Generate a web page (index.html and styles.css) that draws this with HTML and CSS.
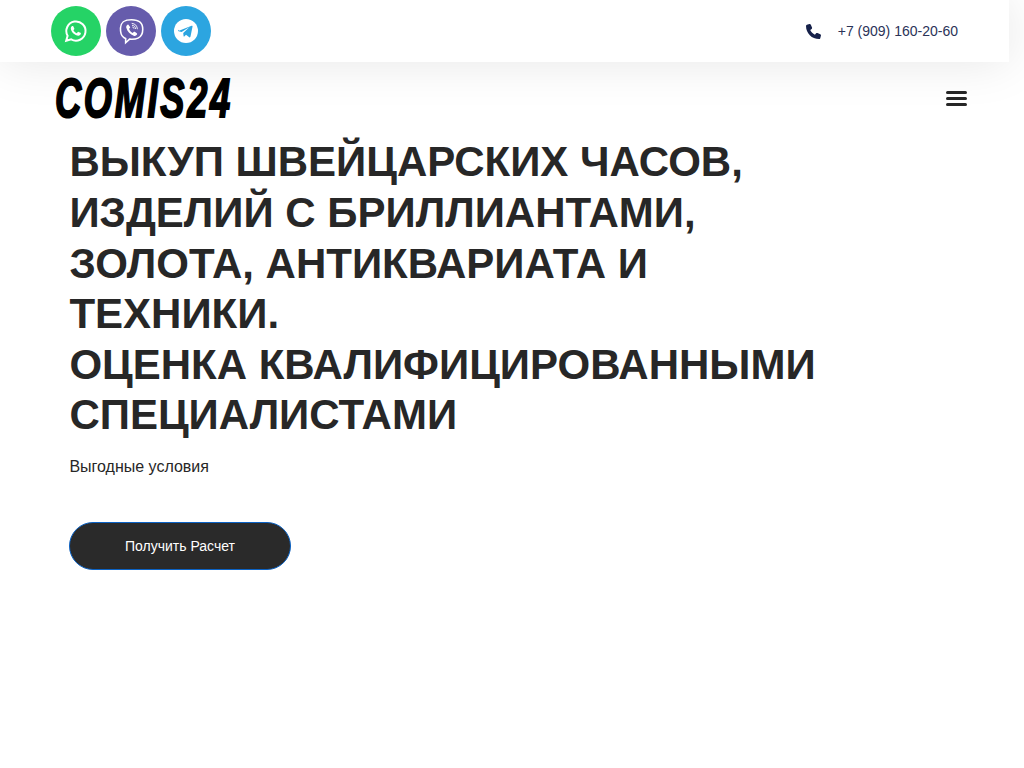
FILE: index.html
```html
<!DOCTYPE html>
<html lang="ru">
<head>
<meta charset="utf-8">
<title>COMIS24</title>
<link rel="stylesheet" href="styles.css">
</head>
<body>
<div class="page">
  <header class="topbar">
    <div class="socials">
      <a class="social whatsapp" href="#">
        <svg viewBox="0 0 24 24" width="24" height="24"><path fill="none" stroke="#fff" stroke-width="2" d="M2.200 21.800l1.400-5A9.600 9.600 0 1 1 7.200 20.400z"/><path fill="#fff" d="M8.600 6.900c.3 0 .6 0 .8.5l.9 2.100c.1.300 0 .5-.1.7l-.8 1c.8 1.400 1.900 2.400 3.400 3.100l1-1.200c.2-.3.500-.3.700-.2l2 .9c.4.200.5.400.4.800-.2 1.400-1.400 2.100-2.500 2.100-3.500-.2-7.100-3.400-7.600-7.200-.1-1.100.6-2.100 1.300-2.500.2-.1.300-.1.500-.1z"/></svg>
      </a>
      <a class="social viber" href="#">
        <svg viewBox="0 0 24 24" width="27" height="27"><path fill="none" stroke="#fff" stroke-width="1.400" d="M12 1.500c-5 0-9.500 1-9.800 7.500-.1 2.500-.2 6 2.800 8.300.6.500 1.200.8 1.800 1v3.700l3.500-3.200c4.500.3 11.700.2 11.700-8.800 0-7-4.500-8.500-10-8.500z"/><path fill="#fff" d="M8.300 5.800c.4-.2.800-.1 1 .2l1.400 1.900c.2.300.2.700-.1 1l-.8.700c.5 1.700 1.600 3 3.300 3.700l.8-.9c.3-.3.700-.3 1-.1l1.800 1.300c.4.300.4.700.2 1.100-.7 1-1.500 1.500-2.500 1.200-3.700-1.300-6-3.700-7.100-7.500-.1-1.100.5-1.900 1.500-2.600z"/><path fill="none" stroke="#fff" stroke-width=".8" stroke-linecap="round" d="M12.500 4.800c2.800.3 4.500 2 4.700 4.800M12.800 6.500c1.600.2 2.600 1.200 2.800 2.900M13.100 8.100c.7.100 1 .5 1.100 1.100"/></svg>
      </a>
      <a class="social telegram" href="#">
        <svg viewBox="0 0 24 24" width="24" height="24"><circle cx="12" cy="12" r="12" fill="#fff"/><path fill="#2ca5e0" d="M5 11.800l12.600-5c.7-.2 1.100.2.900 1l-2 9.800c-.2.800-.7 1-1.200.6l-3.300-2.400-1.700 1.600c-.3.300-.6.300-.7-.1l-.4-3.400 6.400-5.800-8 5-3-.9c-.7-.2-.7-.6.400-1.400z"/></svg>
      </a>
    </div>
    <a class="phone" href="#">
      <svg class="phone-icon" viewBox="0 0 512 512" width="15" height="15"><path fill="#16214a" d="M164.900 24.600c-7.700-18.600-28-28.500-47.400-23.200l-88 24C12.100 30.200 0 46 0 64c0 247.400 200.600 448 448 448 18 0 33.800-12.100 38.600-29.500l24-88c5.300-19.400-4.600-39.700-23.200-47.400l-96-40c-16.300-6.800-35.200-2.100-46.300 11.600L304.700 368c-70.400-33.300-127.400-90.300-160.700-160.700l49.300-40.300c13.700-11.200 18.400-30 11.600-46.300l-40-96z"/></svg>
      <span>+7 (909) 160-20-60</span>
    </a>
  </header>
  <div class="brandbar">
    <a class="logo" href="#">COMIS24</a>
    <button class="menu" type="button" aria-label="Меню">
      <span></span><span></span><span></span>
    </button>
  </div>
  <main class="hero">
    <h1>ВЫКУП ШВЕЙЦАРСКИХ ЧАСОВ, ИЗДЕЛИЙ С БРИЛЛИАНТАМИ, ЗОЛОТА, АНТИКВАРИАТА И ТЕХНИКИ.<br>ОЦЕНКА КВАЛИФИЦИРОВАННЫМИ СПЕЦИАЛИСТАМИ</h1>
    <p>Выгодные условия</p>
    <a class="cta" href="#">Получить Расчет</a>
  </main>
</div>
</body>
</html>
```
FILE: styles.css
```css
html, body {
  margin: 0;
  padding: 0;
  background: #fff;
  overflow: hidden;
}
.page {
  width: 1009px;
  height: 768px;
  font-family: "Liberation Sans", Arial, sans-serif;
  color: #272727;
}
.topbar {
  display: flex;
  justify-content: space-between;
  align-items: center;
  height: 62px;
  padding: 0 51px;
  background: #fff;
  box-shadow: 0 0 50px rgba(0, 0, 0, 0.1);
  position: relative;
  box-sizing: border-box;
}
.socials {
  display: flex;
  gap: 5px;
}
.social {
  width: 50px;
  height: 50px;
  border-radius: 50%;
  display: flex;
  align-items: center;
  justify-content: center;
}
.whatsapp { background: #25d366; }
.viber { background: #665cac; }
.telegram { background: #2ca5e0; }
.phone {
  display: flex;
  align-items: center;
  gap: 17px;
  font-size: 14px;
  color: #2b3358;
  text-decoration: none;
}
.brandbar {
  display: flex;
  justify-content: space-between;
  align-items: center;
  height: 72px;
  padding: 0 42px 0 55px;
}
.logo {
  display: inline-block;
  font-size: 55px;
  font-weight: 700;
  font-style: italic;
  line-height: 1;
  letter-spacing: 4px;
  color: #000;
  text-decoration: none;
  -webkit-text-stroke: 2px #000;
  transform: scaleX(0.66);
  transform-origin: left center;
}
.menu {
  display: flex;
  flex-direction: column;
  gap: 3px;
  width: 21px;
  padding: 0;
  border: 0;
  background: none;
}
.menu span {
  display: block;
  width: 21px;
  height: 3px;
  border-radius: 2px;
  background: #272727;
}
.hero {
  padding: 3.400px 0 0 69px;
}
h1 {
  margin: 0;
  width: 780px;
  padding-left: 0.400px;
  font-size: 42px;
  line-height: 50.600px;
  font-weight: 700;
}
.hero p {
  margin: 14px 0 0;
  padding-left: 0.400px;
  font-size: 16px;
  line-height: 24px;
}
.cta {
  display: flex;
  align-items: center;
  justify-content: center;
  width: 222px;
  height: 48px;
  margin-top: 43px;
  box-sizing: border-box;
  border: 1px solid #0b62c4;
  border-radius: 24px;
  background: #2a2a2a;
  color: #fff;
  font-size: 14px;
  text-decoration: none;
}
```
